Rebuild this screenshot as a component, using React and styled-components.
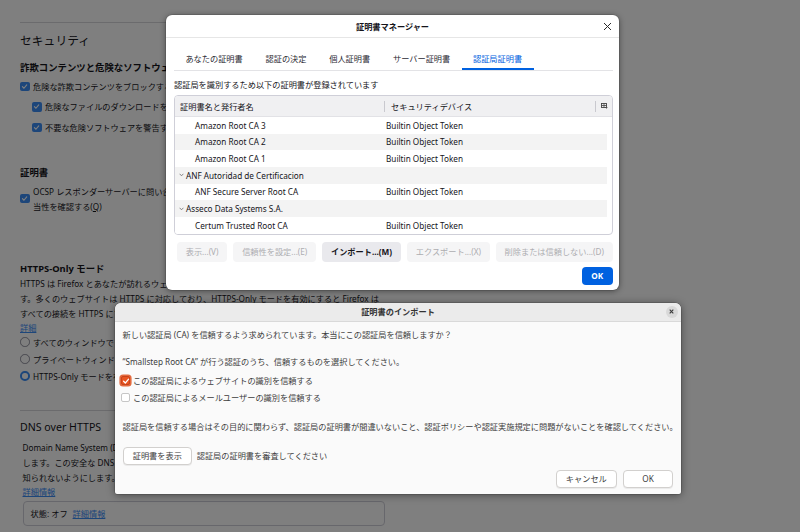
import styled, { createGlobalStyle } from "styled-components";

const GlobalStyle = createGlobalStyle`
  html, body { margin: 0; padding: 0; background: #fff; }
  body {
    font-family: "Noto Sans", "Noto Sans CJK JP", sans-serif;
    font-size: 8.2px;
    color: #15141a;
    overflow: hidden;
  }
  *, *::before, *::after { box-sizing: border-box; }
`;

const ACCENT = "#3a8cf5";

const certs = [
  { name: "Amazon Root CA 3", token: "Builtin Object Token" },
  { name: "Amazon Root CA 2", token: "Builtin Object Token" },
  { name: "Amazon Root CA 1", token: "Builtin Object Token" },
  { name: "ANF Autoridad de Certificacion", group: true },
  { name: "ANF Secure Server Root CA", token: "Builtin Object Token" },
  { name: "Asseco Data Systems S.A.", group: true },
  { name: "Certum Trusted Root CA", token: "Builtin Object Token" },
];

const actions = [
  { label: "表示...(V)" },
  { label: "信頼性を設定...(E)" },
  { label: "インポート...(M)", enabled: true },
  { label: "エクスポート...(X)" },
  { label: "削除または信頼しない...(D)" },
];

const tabs = ["あなたの証明書", "認証の決定", "個人証明書", "サーバー証明書", "認証局証明書"];

function Tick({ size = 7, color = "#fff", width = 1.6 }) {
  return (
    <svg width={size} height={size} viewBox="0 0 10 10">
      <path d="M2 5.3 4.2 7.5 8.2 2.7" fill="none" stroke={color} strokeWidth={width} strokeLinecap="round" strokeLinejoin="round" />
    </svg>
  );
}

export default function App() {
  return (
    <>
      <GlobalStyle />
      <Stage>
        <SettingsPage />
        <Dimmer />
        <CertManager />
        <ImportDialog />
      </Stage>
    </>
  );
}

function SettingsPage() {
  return (
    <Prefs>
      <Group $rule>
        <PageTitle $size={11.8}>セキュリティ</PageTitle>
        <Heading $top={11}>詐欺コンテンツと危険なソフトウェアからの保護</Heading>
        <CheckRow $top={1}>
          <PrefCheck><Tick /></PrefCheck>
          危険な詐欺コンテンツをブロックする(<u>B</u>)
        </CheckRow>
        <CheckRow $indent={12}>
          <PrefCheck><Tick /></PrefCheck>
          危険なファイルのダウンロードをブロックする(<u>D</u>)
        </CheckRow>
        <CheckRow $indent={12}>
          <PrefCheck><Tick /></PrefCheck>
          不要な危険ソフトウェアを警告する(<u>C</u>)
        </CheckRow>

        <Heading $top={27}>証明書</Heading>
        <CheckRow $top={4} $tall>
          <PrefCheck><Tick /></PrefCheck>
          <span>
            OCSP レスポンダーサーバーに問い合わせて証明書の現在の正<br />
            当性を確認する(<u>Q</u>)
          </span>
        </CheckRow>

        <Heading $top={47}>HTTPS-Only モード</Heading>
        <Para>
          HTTPS は Firefox とあなたが訪れるウェブサイトとの間に、暗号化された安全な接続を提供しま<br />
          す。多くのウェブサイトは HTTPS に対応しており、HTTPS-Only モードを有効にすると Firefox は<br />
          すべての接続を HTTPS にアップグレードします。
        </Para>
        <LinkLine>詳細</LinkLine>
        <RadioRow><Radio />すべてのウィンドウで HTTPS-Only モードを有効にする(<u>Y</u>)</RadioRow>
        <RadioRow><Radio />プライベートウィンドウのみ HTTPS-Only モードを有効にする(<u>P</u>)</RadioRow>
        <RadioRow><Radio $on />HTTPS-Only モードを有効にしない(<u>N</u>)</RadioRow>
      </Group>

      <Group $rule $top={25.5}>
        <PageTitle $size={10.6} $top={7}>DNS over HTTPS</PageTitle>
        <Inset>
          <Para $top={3.5}>
            Domain Name System (DNS) over HTTPS はドメイン名の要求を暗号化された接続を通じて送信<br />
            します。この安全な DNS を使うことで、あなたが訪れようとしているウェブサイトを他者に<br />
            知られないようにします。
          </Para>
          <LinkLine $lh={14}>詳細情報</LinkLine>
          <StatusBox>
            状態: オフ <Link>詳細情報</Link>
          </StatusBox>
        </Inset>
      </Group>
    </Prefs>
  );
}

function CertManager() {
  return (
    <CertWindow>
      <CertTitle>
        <span />
        <strong>証明書マネージャー</strong>
        <CloseX>
          <svg width="9" height="9" viewBox="0 0 9 9">
            <path d="M1 1 8 8M8 1 1 8" stroke="#2b2b2b" strokeWidth="1" />
          </svg>
        </CloseX>
      </CertTitle>
      <CertBody>
        <TabBar>
          {tabs.map((t, i) => (
            <Tab key={t} $active={i === tabs.length - 1}>{t}</Tab>
          ))}
        </TabBar>
        <Description>認証局を識別するため以下の証明書が登録されています</Description>
        <Tree>
          <TreeHead>
            <HeadCell>証明書名と発行者名</HeadCell>
            <HeadCell>セキュリティデバイス</HeadCell>
            <PickerCell>
              <svg width="7" height="6" viewBox="0 0 7 6">
                <rect x="0.5" y="0.5" width="5" height="4" fill="none" stroke="#444" strokeWidth="0.9" />
                <path d="M0.5 2.5h5M3 0.5v4" stroke="#444" strokeWidth="0.8" />
                <path d="M4.2 4.2h2.6L5.5 5.8z" fill="#444" />
              </svg>
            </PickerCell>
          </TreeHead>
          <TreeRows>
            {certs.map((c, i) => (
              <TreeRow key={c.name} $striped={i % 2 === 1}>
                <NameCell $group={c.group}>
                  {c.group && (
                    <svg width="5" height="4" viewBox="0 0 5 4">
                      <path d="M0.6 0.8 2.5 2.8 4.4 0.8" fill="none" stroke="#6a6a6a" strokeWidth="0.8" />
                    </svg>
                  )}
                  {c.name}
                </NameCell>
                <span>{c.token}</span>
              </TreeRow>
            ))}
          </TreeRows>
        </Tree>
        <ActionBar>
          {actions.map((a) => (
            <ActionButton key={a.label} $enabled={a.enabled}>{a.label}</ActionButton>
          ))}
        </ActionBar>
        <Footer>
          <PrimaryButton>OK</PrimaryButton>
        </Footer>
      </CertBody>
    </CertWindow>
  );
}

function ImportDialog() {
  return (
    <ImportWindow>
      <ImportTitle>
        <span />
        <strong>証明書のインポート</strong>
        <CircleClose>
          <svg width="5" height="5" viewBox="0 0 5 5">
            <path d="M0.7 0.7 4.3 4.3M4.3 0.7 0.7 4.3" stroke="#3a3a3a" strokeWidth="1.1" />
          </svg>
        </CircleClose>
      </ImportTitle>
      <ImportBody>
        <Line $top={4.5}>新しい認証局 (CA) を信頼するよう求められています。本当にこの認証局を信頼しますか？</Line>
        <Line $top={12.4}>“Smallstep Root CA” が行う認証のうち、信頼するものを選択してください。</Line>
        <GtkCheckRow $top={2.3}>
          <GtkCheck $on><Tick size={8} width={1.5} /></GtkCheck>
          この認証局によるウェブサイトの識別を信頼する
        </GtkCheckRow>
        <GtkCheckRow>
          <GtkCheck />
          この認証局によるメールユーザーの識別を信頼する
        </GtkCheckRow>
        <Line $top={13}>認証局を信頼する場合はその目的に関わらず、認証局の証明書が間違いないこと、認証ポリシーや認証実施規定に問題がないことを確認してください。</Line>
        <ViewRow>
          <GtkButton>証明書を表示</GtkButton>
          認証局の証明書を審査してください
        </ViewRow>
        <DialogButtons>
          <GtkButton $h={18} $w={60}>キャンセル</GtkButton>
          <GtkButton $h={18} $w={50}>OK</GtkButton>
        </DialogButtons>
      </ImportBody>
    </ImportWindow>
  );
}

/* ---------- stage ---------- */

const Stage = styled.div`
  position: relative;
  width: 800px;
  height: 532px;
  overflow: hidden;
  background: #fff;
`;

const Dimmer = styled.div`
  position: absolute;
  inset: 0;
  background: rgba(0, 0, 0, 0.5);
`;

/* ---------- settings page ---------- */

const Prefs = styled.main`
  width: 385px;
  padding: 22px 0 0 20px;
  display: flex;
  flex-direction: column;
  line-height: 15px;
  white-space: nowrap;
  u { text-decoration: underline; }
`;

const Group = styled.section`
  display: flex;
  flex-direction: column;
  margin-top: ${({ $top }) => $top || 0}px;
  border-top: ${({ $rule }) => ($rule ? "1px solid #d7d7db" : "0")};
`;

const PageTitle = styled.h1`
  margin: ${({ $top }) => $top ?? 8}px 0 0;
  font-size: ${({ $size }) => $size}px;
  font-weight: 400;
  line-height: 18px;
`;

const Heading = styled.h2`
  margin: ${({ $top }) => $top || 0}px 0 0;
  font-size: 9.4px;
  font-weight: 700;
  line-height: 15px;
`;

const CheckRow = styled.label`
  display: flex;
  align-items: center;
  gap: 3.5px;
  height: ${({ $tall }) => ($tall ? 30 : 20.5)}px;
  margin-top: ${({ $top }) => $top || 0}px;
  padding-left: ${({ $indent }) => $indent || 0}px;
`;

const PrefCheck = styled.span`
  flex: none;
  width: 9.5px;
  height: 9.5px;
  border-radius: 2px;
  background: ${ACCENT};
  display: grid;
  place-items: center;
`;

const Para = styled.p`
  margin: ${({ $top }) => $top || 0}px 0 0;
  line-height: 15px;
`;

const Link = styled.a`
  color: ${ACCENT};
  text-decoration: underline;
`;

const LinkLine = styled(Link)`
  display: block;
  line-height: ${({ $lh }) => $lh || 13}px;
`;

const RadioRow = styled.label`
  display: flex;
  align-items: center;
  gap: 3.5px;
  height: 17px;
`;

const Radio = styled.span`
  flex: none;
  width: 9.5px;
  height: 9.5px;
  border-radius: 50%;
  background: #fff;
  border: ${({ $on }) => ($on ? `2.6px solid ${ACCENT}` : "1px solid #8f8f9d")};
`;

const Inset = styled.div`
  display: flex;
  flex-direction: column;
  padding-left: 2.5px;
`;

const StatusBox = styled.div`
  margin-top: 2.5px;
  width: 362px;
  height: 25px;
  border: 1px solid #cfcfd8;
  border-radius: 4px;
  display: flex;
  align-items: center;
  gap: 5px;
  padding: 0 7px;
`;

/* ---------- certificate manager ---------- */

const CertWindow = styled.div`
  position: absolute;
  left: 166px;
  top: 15px;
  width: 453px;
  height: 275px;
  background: #fff;
  border-radius: 6px;
  box-shadow: 0 1px 6px rgba(0, 0, 0, 0.45), 0 0 0 0.5px rgba(0, 0, 0, 0.2);
  display: flex;
  flex-direction: column;
  overflow: hidden;
`;

const CertTitle = styled.header`
  flex: none;
  height: 23px;
  display: grid;
  grid-template-columns: 1fr auto 1fr;
  align-items: center;
  border-bottom: 1px solid #e6e6e6;
  strong { font-weight: 700; }
`;

const CloseX = styled.span`
  justify-self: end;
  margin-right: 7px;
  display: flex;
`;

const CertBody = styled.div`
  flex: 1;
  display: flex;
  flex-direction: column;
  padding: 0 6px 0 8px;
  line-height: 15px;
`;

const TabBar = styled.nav`
  margin-top: 8px;
  display: flex;
  border-bottom: 1px solid #e3e3e6;
  margin-right: 0.5px;
`;

const Tab = styled.span`
  height: 24px;
  display: flex;
  align-items: center;
  padding: 0 11.4px;
  color: ${({ $active }) => ($active ? "#0061e0" : "#2b2a33")};
  box-shadow: ${({ $active }) => ($active ? "inset 0 -2px 0 #0061e0" : "none")};
`;

const Description = styled.div`
  margin-top: 6px;
`;

const Tree = styled.div`
  margin-top: 3px;
  border: 1px solid #cfcfd8;
  border-radius: 4px;
  overflow: hidden;
`;

const TreeHead = styled.div`
  height: 21px;
  display: grid;
  grid-template-columns: 211px 211px 1fr;
  align-items: center;
  background: #f0f0f2;
  border-bottom: 1px solid #e2e2e6;
`;

const HeadCell = styled.span`
  height: 100%;
  display: flex;
  align-items: center;
  padding-left: 5px;
  border-right: 1px solid transparent;
  position: relative;
  &::after {
    content: "";
    position: absolute;
    right: 0;
    top: 4.5px;
    bottom: 4.5px;
    width: 1px;
    background: #c9c9cf;
  }
  &:first-child { padding-left: 5px; }
`;

const PickerCell = styled.span`
  display: flex;
  justify-content: center;
  align-items: center;
`;

const TreeRows = styled.div`
  margin-right: 5px;
`;

const TreeRow = styled.div`
  height: 16.67px;
  display: grid;
  grid-template-columns: 211px 1fr;
  align-items: center;
  background: ${({ $striped }) => ($striped ? "#f3f3f3" : "#fff")};
`;

const NameCell = styled.span`
  display: flex;
  align-items: center;
  gap: 2px;
  padding-left: ${({ $group }) => ($group ? 4 : 20)}px;
`;

const ActionBar = styled.div`
  margin-top: 7px;
  padding-left: 2.7px;
  display: flex;
  justify-content: space-between;
`;

const ActionButton = styled.span`
  height: 20.6px;
  padding: 0 9px;
  border-radius: 4px;
  display: flex;
  align-items: center;
  background: ${({ $enabled }) => ($enabled ? "#e9e9ed" : "#f5f5f6")};
  color: ${({ $enabled }) => ($enabled ? "#15141a" : "#adadb1")};
  font-weight: ${({ $enabled }) => ($enabled ? 700 : 400)};
`;

const Footer = styled.div`
  margin-top: 4.4px;
  display: flex;
  justify-content: flex-end;
  padding-right: 0.5px;
`;

const PrimaryButton = styled.span`
  width: 30.6px;
  height: 18.3px;
  border-radius: 4px;
  background: #0061e0;
  color: #fff;
  font-weight: 700;
  display: grid;
  place-items: center;
`;

/* ---------- import dialog ---------- */

const ImportWindow = styled.div`
  position: absolute;
  left: 115px;
  top: 302.5px;
  width: 566px;
  height: 191px;
  background: #fafafa;
  border-radius: 6px 6px 2px 2px;
  overflow: hidden;
  box-shadow: 0 1px 8px rgba(0, 0, 0, 0.45), 0 0 0 0.5px rgba(0, 0, 0, 0.25);
  display: flex;
  flex-direction: column;
  color: #3d3d3d;
  line-height: 15px;
`;

const ImportTitle = styled.header`
  flex: none;
  height: 19.8px;
  display: grid;
  grid-template-columns: 1fr auto 1fr;
  align-items: center;
  background: #ebebeb;
  border-bottom: 1px solid #d9d9d9;
  strong { font-weight: 700; color: #333; }
`;

const CircleClose = styled.span`
  justify-self: end;
  margin-right: 3px;
  width: 12.5px;
  height: 12.5px;
  border-radius: 50%;
  background: #d9d9d9;
  display: grid;
  place-items: center;
`;

const ImportBody = styled.div`
  flex: 1;
  display: flex;
  flex-direction: column;
  padding: 0 8px 0 7.5px;
`;

const Line = styled.div`
  margin-top: ${({ $top }) => $top || 0}px;
  white-space: nowrap;
`;

const GtkCheckRow = styled.label`
  display: flex;
  align-items: center;
  gap: 3.5px;
  height: 17.5px;
  margin: ${({ $top }) => $top || 0}px 0 0 -2px;
`;

const GtkCheck = styled.span`
  flex: none;
  width: 9px;
  height: 9px;
  border-radius: 2px;
  display: grid;
  place-items: center;
  background: ${({ $on }) => ($on ? "#e95420" : "#fff")};
  border: 1px solid ${({ $on }) => ($on ? "#c7431a" : "#c6c6c6")};
  box-shadow: ${({ $on }) => ($on ? "0 0 0 1.6px #e36a3e" : "none")};
`;

const ViewRow = styled.div`
  margin-top: 12.8px;
  display: flex;
  align-items: center;
  gap: 4.7px;
`;

const GtkButton = styled.span`
  height: ${({ $h }) => $h || 17.4}px;
  min-width: ${({ $w }) => ($w ? `${$w}px` : "auto")};
  padding: 0 9.2px;
  border: 1px solid #d2d0ce;
  border-radius: 4px;
  background: #fff;
  box-shadow: 0 1px 0 rgba(0, 0, 0, 0.06);
  display: flex;
  align-items: center;
  justify-content: center;
  color: #3d3d3d;
`;

const DialogButtons = styled.div`
  margin-top: 5.3px;
  display: flex;
  justify-content: flex-end;
  gap: 6px;
`;
